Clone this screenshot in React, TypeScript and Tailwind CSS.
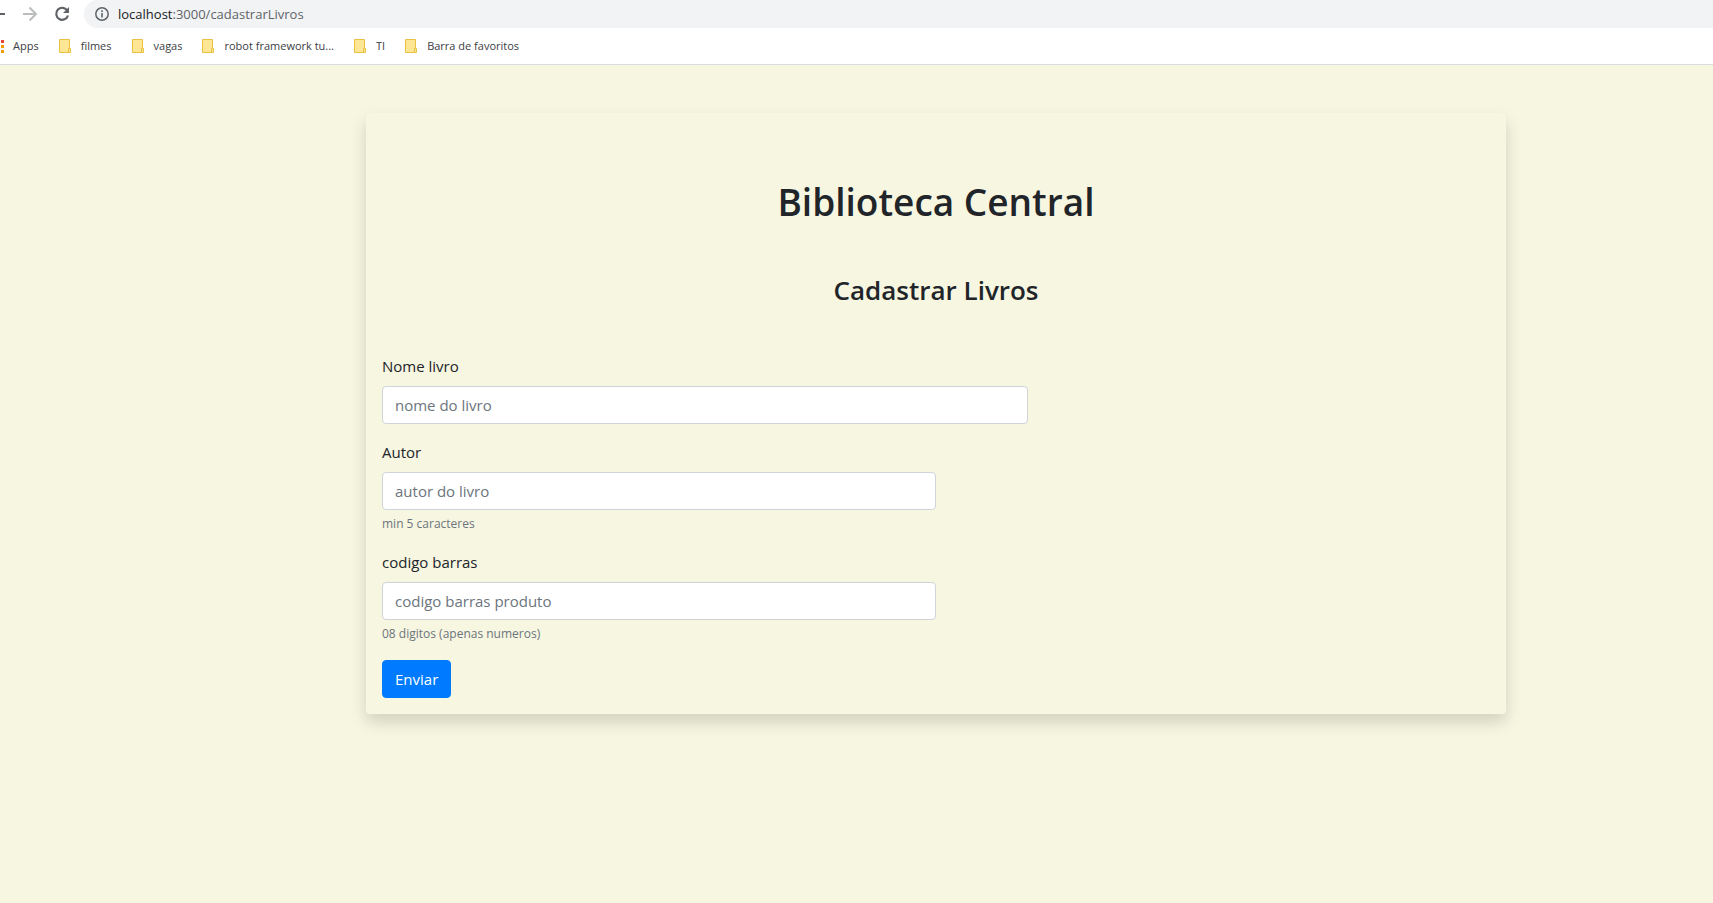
import React from "react";

const bookmarks = ["filmes", "vagas", "robot framework tu...", "TI", "Barra de favoritos"];

function FolderIcon() {
  return (
    <svg width="13" height="14" viewBox="0 0 13 14" aria-hidden="true">
      <path d="M.5.5h10v13H.5z" fill="#ffe694" stroke="#e9c244" />
      <path d="M9.500 9.500h2v4h-2z" fill="#ffe694" stroke="#e9c244" />
    </svg>
  );
}

function AppsIcon() {
  return (
    <svg width="4" height="13" viewBox="0 0 4 13" aria-hidden="true">
      <path d="M1 0h3v3H1z" fill="#ea4335" />
      <path d="M1 5h3v3H1zM1 10h3v3H1z" fill="#f29900" />
    </svg>
  );
}

function BrowserBar() {
  return (
    <header className="border-b border-[#dadce0] bg-white">
      <div className="flex h-7 items-center">
        <button type="button" aria-label="Voltar" className="w-[22px]">
          <svg width="5" height="16" viewBox="0 0 5 16" aria-hidden="true">
            <path d="M0 8h5" stroke="#5f6368" strokeWidth="2" />
          </svg>
        </button>
        <button type="button" aria-label="Avançar" className="w-8">
          <svg width="16" height="16" viewBox="0 0 16 16" fill="none" stroke="#babcbe" strokeWidth="2" aria-hidden="true">
            <path d="M1 8h13M7.5 1.5 14 8l-6.500 6.500" />
          </svg>
        </button>
        <button type="button" aria-label="Recarregar" className="w-[30px]">
          <svg width="16" height="16" viewBox="0 0 16 16" aria-hidden="true">
            <path d="M13.300 4.500A6 6 0 1 0 14 9.500" fill="none" stroke="#5f6368" strokeWidth="2.200" />
            <path d="M15 1v6H9z" fill="#5f6368" />
          </svg>
        </button>
        <div className="flex h-7 flex-1 items-center gap-[9px] rounded-l-full bg-[#f1f3f4] pl-[11px]">
          <svg width="14" height="14" viewBox="0 0 14 14" fill="none" stroke="#5f6368" aria-hidden="true">
            <circle cx="7" cy="7" r="6.200" strokeWidth="1.500" />
            <path d="M7 6v4.500M7 3.300v1.700" strokeWidth="1.600" />
          </svg>
          <span className="text-[13px] leading-5 text-[#5f6368]">
            <span className="text-[#202124]">localhost</span>:3000/cadastrarLivros
          </span>
        </div>
      </div>
      <nav className="flex h-9 items-center gap-5 text-[11px] text-[#3c4043]">
        <a href="#apps" className="flex items-center gap-[9px]">
          <AppsIcon />
          Apps
        </a>
        {bookmarks.map((name) => (
          <a key={name} href="#favoritos" className="flex items-center gap-[9px]">
            <FolderIcon />
            {name}
          </a>
        ))}
      </nav>
    </header>
  );
}

type FieldProps = { id: string; label: string; placeholder: string; hint?: string; wide?: boolean };

function Field({ id, label, placeholder, hint, wide }: FieldProps) {
  return (
    <div className="mb-4">
      <label htmlFor={id} className="mb-2 block text-[15px] leading-6">
        {label}
      </label>
      <input
        id={id}
        type="text"
        placeholder={placeholder}
        className={`${wide ? "w-7/12" : "w-1/2"} block h-[38px] rounded border border-[#ced4da] bg-white px-3 text-[15px] placeholder:text-[#6c757d]`}
      />
      {hint && <small className="mt-1 block text-[12px] leading-5 text-[#6c757d]">{hint}</small>}
    </div>
  );
}

export default function App() {
  return (
    <div className="min-h-screen bg-[#f7f6e1] font-['Open_Sans','Noto_Sans',sans-serif] text-[#212529]">
      <BrowserBar />
      <main className="pt-12 pl-[159px]">
        <section className="mx-auto max-w-[1140px] rounded p-4 shadow-[0_8px_16px_rgba(0,0,0,0.15)]">
          <h1 className="mt-12 text-center text-[37px] leading-[50px] font-semibold">Biblioteca Central</h1>
          <h3 className="my-12 text-center text-[26px] leading-[31px] font-semibold">Cadastrar Livros</h3>
          <form onSubmit={(e: React.FormEvent) => e.preventDefault()}>
            <Field id="nome" label="Nome livro" placeholder="nome do livro" wide />
            <Field id="autor" label="Autor" placeholder="autor do livro" hint="min 5 caracteres" />
            <Field
              id="codigo"
              label="codigo barras"
              placeholder="codigo barras produto"
              hint="08 digitos (apenas numeros)"
            />
            <button
              type="submit"
              className="block h-[38px] rounded border border-[#007bff] bg-[#007bff] px-3 text-[15px] text-white"
            >
              Enviar
            </button>
          </form>
        </section>
      </main>
    </div>
  );
}
